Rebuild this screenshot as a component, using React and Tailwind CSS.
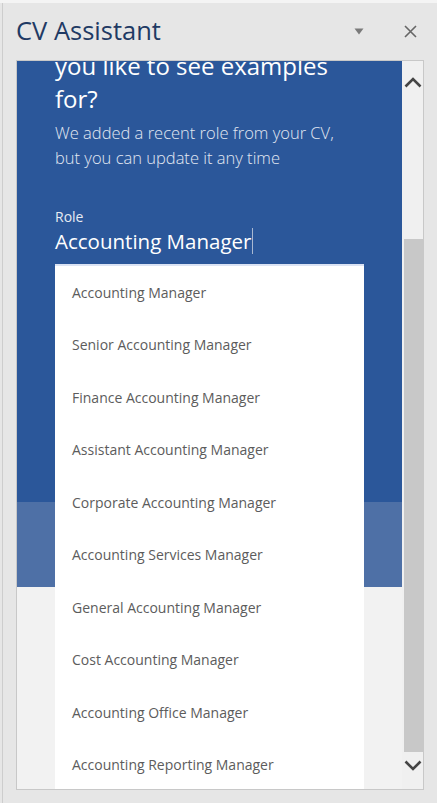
const roles = [
  "Accounting Manager",
  "Senior Accounting Manager",
  "Finance Accounting Manager",
  "Assistant Accounting Manager",
  "Corporate Accounting Manager",
  "Accounting Services Manager",
  "General Accounting Manager",
  "Cost Accounting Manager",
  "Accounting Office Manager",
  "Accounting Reporting Manager",
]

const Chevron = ({ up }) => (
  <svg width="18" height="11" viewBox="0 0 18 11">
    <path
      d={up ? "M1.5 9.5 L9 2 L16.5 9.5" : "M1.5 1.5 L9 9 L16.5 1.5"}
      fill="none"
      stroke="#454545"
      strokeWidth="2.6"
    />
  </svg>
)

const App = () => {
  return (
    <div className="w-[437px] h-[803px] bg-[#e6e6e6] flex flex-col overflow-hidden font-['Open_Sans','Noto_Sans',sans-serif]">
      <div className="h-[3px] bg-[#f4f4f4]" />
      <div className="flex-1 ml-[2px] border-l border-[#cdcdcd] pl-[13px] pr-[13px] flex flex-col">
        <div className="h-[57px] flex items-center justify-between">
          <h1 className="text-[25.5px] leading-none text-[#1f3a64] pb-[1px]">CV Assistant</h1>
          <div className="flex items-center gap-[40px] pr-[7px]">
            <svg width="10" height="7" viewBox="0 0 10 7">
              <path d="M0.5 0.5 L9.5 0.5 L5 6.5 Z" fill="#7a7a7a" />
            </svg>
            <svg width="13" height="13" viewBox="0 0 13 13">
              <path d="M1 1 L12 12 M12 1 L1 12" stroke="#666" strokeWidth="1.6" />
            </svg>
          </div>
        </div>

        <div className="h-[730px] border border-[#c8c8c8] flex">
          <div className="relative flex-1 overflow-hidden flex flex-col">
            <div className="h-[441px] bg-[#2b579a] pl-[38px] pr-[20px] text-white">
              <h2 className="mt-[-12px] text-[24px] leading-[33px]">
                you like to see examples
                <br />
                for?
              </h2>
              <p className="mt-[5px] text-[16.5px] leading-[25px] text-[#e2e8f2] font-light">
                We added a recent role from your CV,
                <br />
                but you can update it any time
              </p>
              <p className="mt-[37px] text-[14px] leading-[20px] text-[#e6ebf3]">Role</p>
              <div className="flex items-center h-[28px]">
                <span className="text-[20.5px] leading-[28px]">Accounting Manager</span>
                <span className="w-[1px] h-[26px] bg-[#a8b8d2] ml-[1px]" />
              </div>
            </div>
            <div className="h-[85px] bg-[#4e70a6]" />
            <div className="flex-1 bg-[#f2f2f2]" />

            <ul className="absolute left-[38px] top-[203px] w-[309px] bg-white border-t-2 border-[#dbe3f4]">
              {roles.map((role) => (
                <li
                  key={role}
                  className="h-[52.5px] flex items-center pl-[17px] text-[14px] text-[#5c5c5c]"
                >
                  {role}
                </li>
              ))}
            </ul>
          </div>

          <div className="w-[21px] bg-[#f0f0f0] flex flex-col">
            <div className="h-[42px] flex items-center justify-center">
              <Chevron up />
            </div>
            <div className="h-[136px]" />
            <div className="h-[513px] ml-[2px] bg-[#c8c8c8]" />
            <div className="h-[26px] flex items-center justify-center">
              <Chevron />
            </div>
          </div>
        </div>
      </div>
    </div>
  )
}

export default App
